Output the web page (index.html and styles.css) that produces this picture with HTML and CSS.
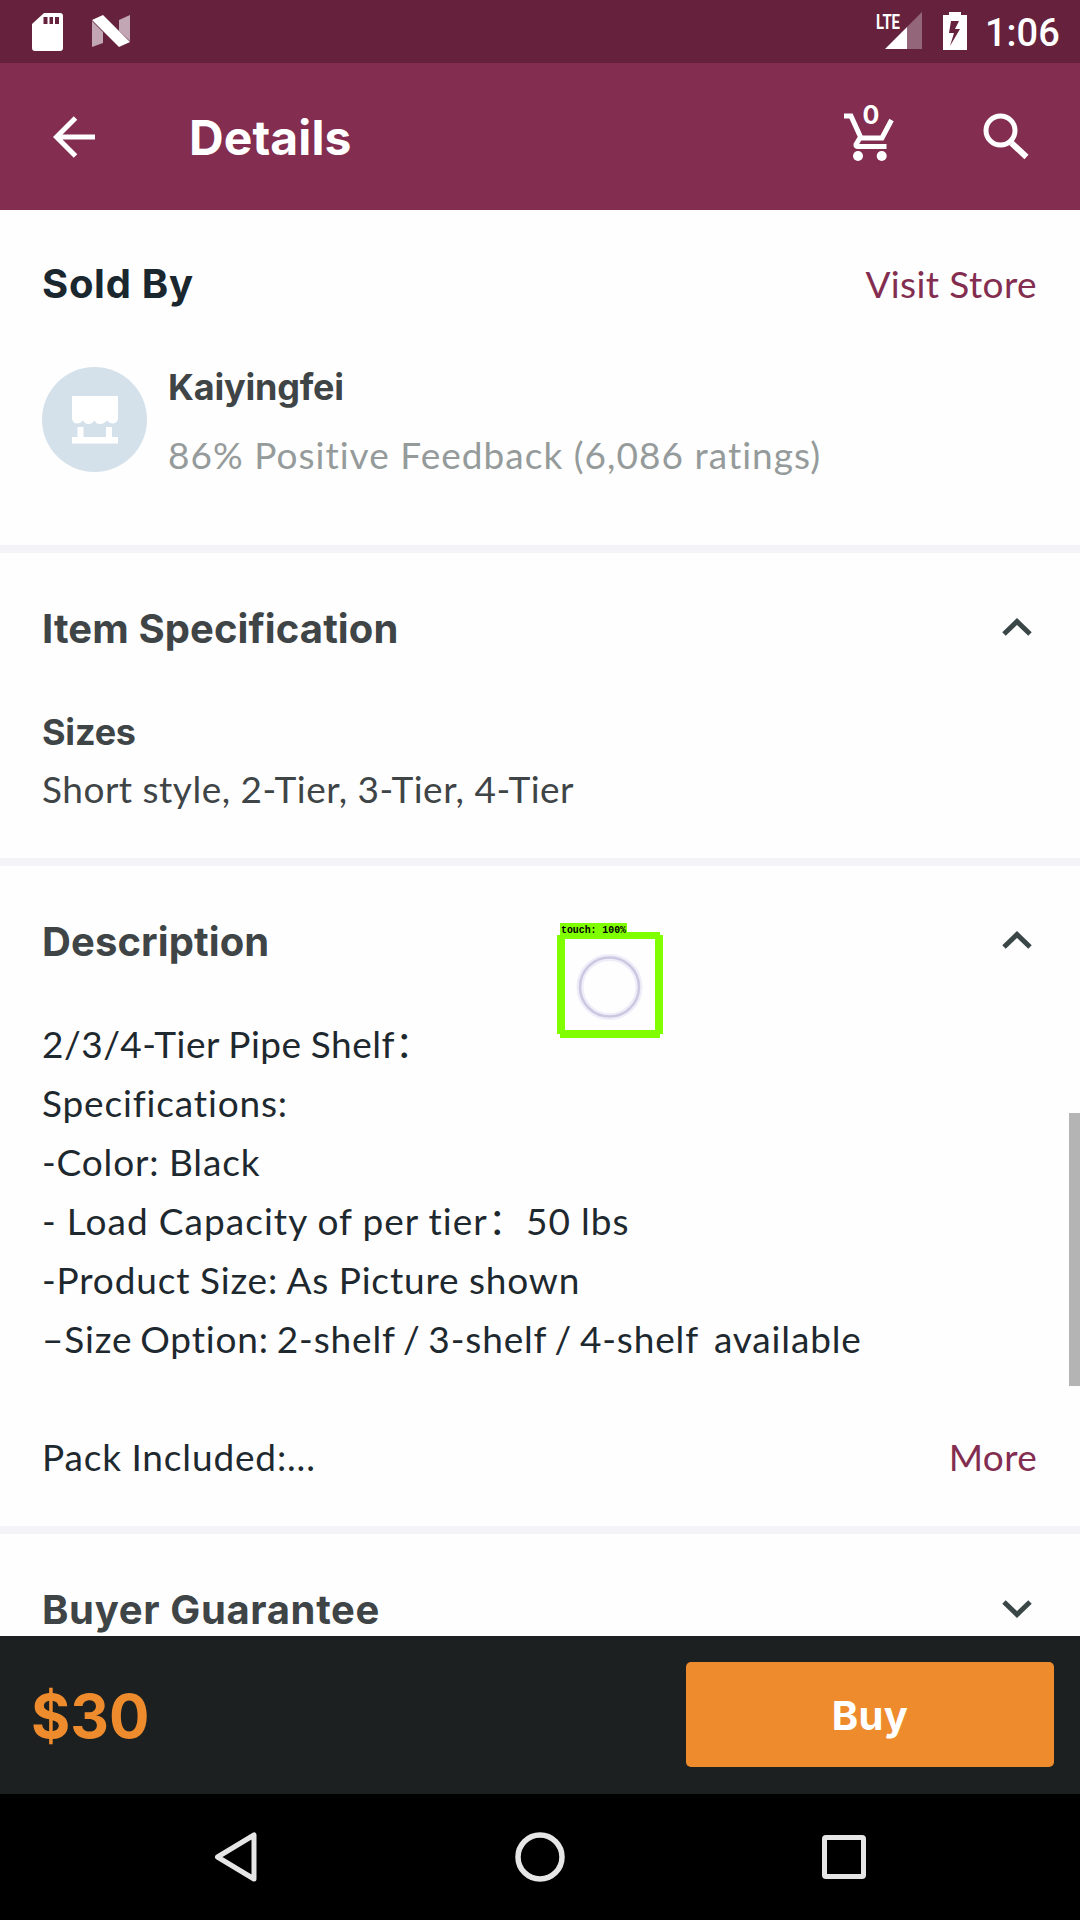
FILE: index.html
```html
<!DOCTYPE html>
<html lang="en">
<head>
<meta charset="utf-8">
<title>Details</title>
<link rel="stylesheet" href="styles.css">
</head>
<body>
<div class="screen">
  <div class="status">
    <svg class="sd" width="32" height="40" viewBox="0 0 32 40"><path fill="#fff" fill-rule="evenodd" d="M12 1H28Q31 1 31 4V36Q31 39 28 39H3Q0 39 0 36V12ZM11.500 5V12H15.500V5ZM17.500 5V12H21V5ZM23 5V12H27V5Z"/></svg>
    <svg class="nougat" width="38" height="32" viewBox="0 0 38 32"><path fill="#c3a6b4" d="M0 6L11 17V28L0 32ZM27 5L38 0V26L27 16Z"/><path fill="#fff" d="M0 5L11 0L38 27L27 32Z"/></svg>
    <svg class="signal" width="48" height="40" viewBox="0 0 48 40"><path fill="#94667a" d="M46 0V37H31V15Z"/><path fill="#fff" d="M31 15V37H9Z"/><text class="lte" x="0" y="17" textLength="24" lengthAdjust="spacingAndGlyphs">LTE</text></svg>
    <svg class="battery" width="24" height="38" viewBox="0 0 24 38"><path fill="#fff" fill-rule="evenodd" d="M6 0H18V3H24V38H0V3H6ZM8 9L6 21H11L7 34L17 17H12L16 9Z"/></svg>
    <span class="clock">1:06</span>
  </div>
  <div class="appbar">
    <svg class="back" width="42" height="42" viewBox="0 0 42 42"><path fill="none" stroke="#fff" stroke-width="5" d="M42 21H4M22.500 2L3.500 21L22.500 40"/></svg>
    <h1 class="title">Details</h1>
    <svg class="cart" width="50" height="56" viewBox="0 0 50 56"><path fill="none" stroke="#fff" stroke-width="5" d="M0 10H7L17 32H38L47.500 14M16.500 31L12 38.500Q11.500 40.500 14 40.500H42.500"/><circle cx="14" cy="50" r="5" fill="#fff"/><circle cx="37.700" cy="50" r="5" fill="#fff"/><text class="count" x="27" y="18" text-anchor="middle">0</text></svg>
    <svg class="search" width="48" height="48" viewBox="0 0 48 48"><circle cx="17.500" cy="17.500" r="14.500" fill="none" stroke="#fff" stroke-width="5"/><path d="M28.500 30L43.500 44" stroke="#fff" stroke-width="6"/></svg>
  </div>
  <div class="content">
    <section class="sold">
      <div class="row"><h2 class="dark">Sold By</h2><a class="link visit">Visit Store</a></div>
      <div class="seller">
        <svg width="105" height="105" viewBox="0 0 105 105"><circle cx="52.500" cy="52.500" r="52.500" fill="#d4e1ea"/><path fill="#fff" d="M30 29H76V52Q75 56 71 56.500Q67 56 65 53.500Q62 57 58 57Q54 57 52.500 53.500Q50 57 46.500 57Q43 57 41 53.500Q38 57 34 56.500Q31 56 30 52ZM35.500 60H41.500V70H64V60H70V70H76V76.500H30V70H35.500Z"/></svg>
        <div class="seller-text"><h3>Kaiyingfei</h3><p class="rating">86% Positive Feedback (6,086 ratings)</p></div>
      </div>
    </section>
    <section class="spec">
      <div class="row"><h2>Item Specification</h2><svg class="chevron" width="30" height="18" viewBox="0 0 30 18"><path fill="none" stroke="#3b4747" stroke-width="5" d="M2 16L15 3.500L28 16"/></svg></div>
      <h3>Sizes</h3>
      <p class="sizes">Short style, 2-Tier, 3-Tier, 4-Tier</p>
    </section>
    <section class="desc">
      <div class="row"><h2>Description</h2><svg class="chevron" width="30" height="18" viewBox="0 0 30 18"><path fill="none" stroke="#3b4747" stroke-width="5" d="M2 16L15 3.500L28 16"/></svg></div>
      <div class="lines">
        <p class="snug">2/3/4-Tier Pipe Shelf：</p>
        <p>Specifications:</p>
        <p>-Color: Black</p>
        <p class="open">- Load Capacity of per tier：50 lbs</p>
        <p>-Product Size: As Picture shown</p>
        <p>–Size Option: 2-shelf / 3-shelf / 4-shelf&nbsp; available</p>
        <p>&nbsp;</p>
        <p class="last"><span>Pack Included:...</span><a class="link">More</a></p>
      </div>
    </section>
    <section class="guarantee">
      <div class="row"><h2>Buyer Guarantee</h2><svg class="chevron" width="30" height="18" viewBox="0 0 30 18"><path fill="none" stroke="#3b4747" stroke-width="5" d="M2 2L15 14.500L28 2"/></svg></div>
    </section>
    <div class="scrollbar"></div>
    <div class="touch">
      <svg width="108" height="118" viewBox="0 0 108 118"><path fill="#80ff00" fill-rule="evenodd" d="M4 1H71V10H104V13H107V112H104V116H4V112H1V13H4ZM9 17V108H99V17Z"/><circle class="halo" cx="53.500" cy="65" r="29.500"/><circle class="ring" cx="53.500" cy="65" r="29.500"/><text class="tag" x="5" y="10.500" textLength="65" lengthAdjust="spacingAndGlyphs">touch: 100%</text></svg>
    </div>
  </div>
  <div class="buybar"><span class="price">$30</span><button class="buy">Buy</button></div>
  <div class="nav">
    <svg width="44" height="50" viewBox="0 0 44 50"><path fill="none" stroke="#e6e6e6" stroke-width="5" stroke-linejoin="round" d="M40 3V47L3.500 25Z"/></svg>
    <svg width="50" height="50" viewBox="0 0 50 50"><circle cx="25" cy="25" r="22" fill="none" stroke="#e6e6e6" stroke-width="5.500"/></svg>
    <svg width="44" height="50" viewBox="0 0 44 50"><rect x="2.500" y="5.500" width="39" height="39" rx="1.500" fill="none" stroke="#e6e6e6" stroke-width="5"/></svg>
  </div>
</div>
</body>
</html>
```
FILE: styles.css
```css
* { box-sizing: border-box; margin: 0; padding: 0; }
body { width: 1080px; height: 1920px; overflow: hidden; background: #fefefe; font-family: Lato, "Noto Sans CJK SC", sans-serif; }
svg { display: block; flex: none; }
.screen { height: 1920px; display: flex; flex-direction: column; }

.status { height: 63px; flex: none; background: #66223d; display: flex; align-items: flex-start; padding-left: 32px; }
.sd { margin-top: 12px; }
.nougat { margin: 15px 0 0 28px; }
.signal { margin: 12px 0 0 746px; overflow: visible; }
.battery { margin: 12px 0 0 19px; }
.clock { margin-left: 18px; font: 500 38px/67px Roboto, sans-serif; color: #fff; }
.lte { font: 700 21px Roboto, sans-serif; fill: #fff; }

.appbar { height: 147px; flex: none; background: #832d50; display: flex; align-items: center; padding-left: 53px; color: #fff; }
.title { margin-left: 94px; font: 700 48px/60px Inter, sans-serif; letter-spacing: 0.1px; padding-top: 3px; width: 561px; }
.cart { margin-left: 94px; margin-top: -5px; overflow: visible; }
.count { font: 700 25px Inter, sans-serif; fill: #fff; }
.search { margin-left: 89px; margin-top: 1px; }

.content { flex: 1; min-height: 0; position: relative; overflow: hidden; }
section { padding: 0 43px 0 42px; border-bottom: 8px solid #f4f4f8; color: #3f4546; }
.row { display: flex; justify-content: space-between; align-items: center; height: 60px; }
h2 { font: 700 40px/60px Inter, sans-serif; letter-spacing: 0.1px; padding-top: 2px; }
h3 { font: 700 36px/50px Inter, sans-serif; letter-spacing: -0.2px; }
p, .link { font-size: 37px; }
.dark { color: #1a272e; letter-spacing: 0.7px; padding-top: 0; }
.link { color: #832d50; letter-spacing: 0.3px; }
.visit { padding-bottom: 2px; letter-spacing: 0.4px; }
.chevron { margin: -3px 5px 0 0; }

.sold { height: 343px; padding-top: 44px; }
.seller { display: flex; margin-top: 53px; }
.seller-text { padding-left: 21px; }
.seller-text h3 { margin-top: -5px; }
.rating { color: #959b9b; line-height: 60px; margin-top: 13px; letter-spacing: 1.03px; }

.spec { height: 313px; padding-top: 45px; }
.spec h3 { margin-top: 49px; }
.sizes { line-height: 60px; margin-top: 2px; letter-spacing: 0.5px; }

.desc { height: 668px; padding-top: 45px; }
.lines { margin-top: 43px; color: #1e292f; }
.lines p { height: 59px; line-height: 59px; letter-spacing: 0.85px; word-spacing: -0.8px; white-space: nowrap; }
.lines .snug { letter-spacing: 0.5px; }
.lines .open { letter-spacing: 1.05px; word-spacing: -0.5px; }
.lines .last { display: flex; justify-content: space-between; }
.lines .link { letter-spacing: 0.3px; }
.lines p:nth-child(6) { word-spacing: -2.5px; }

.guarantee { padding-top: 45px; border: 0; }
.guarantee h2 { letter-spacing: 0.65px; }
.guarantee .chevron { margin-top: 0; }

.scrollbar { position: absolute; right: 0; top: 903px; width: 11px; height: 273px; background: #b4b4b4; }
.touch { position: absolute; left: 556px; top: 712px; }
.ring { fill: none; stroke: #cdc8e2; stroke-width: 2.5; }
.halo { fill: none; stroke: #efedf8; stroke-width: 7; }
.tag { font: 700 11px "Liberation Mono", monospace; fill: #000; }

.buybar { height: 158px; flex: none; background: #1d2020; display: flex; align-items: center; justify-content: space-between; padding: 0 26px 2px 31px; }
.price { font: 700 60px/80px Inter, sans-serif; color: #ee8c2d; padding-top: 3px; }
.buy { width: 368px; height: 105px; border: 0; border-radius: 5px; background: #ee8c2d; color: #fff; font: 700 40px/60px Inter, sans-serif; padding-top: 3px; letter-spacing: 0.4px; }

.nav { height: 126px; flex: none; background: #000; display: flex; justify-content: space-between; align-items: center; padding: 0 214px; }
```
